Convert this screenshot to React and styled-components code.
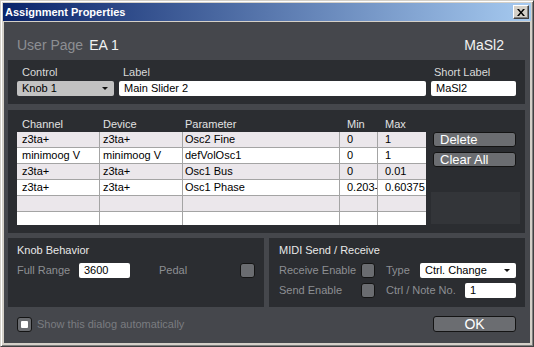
import React from 'react';
import styled, { createGlobalStyle } from 'styled-components';

const Global = createGlobalStyle`
  html, body { margin: 0; padding: 0; background: #d4d0c8; }
  body { font-family: "Liberation Sans", Arial, sans-serif; font-size: 11px; }
  * { box-sizing: border-box; }
`;

const Window = styled.div`
  width: 534px;
  height: 347px;
  background: #d4d0c8;
  border-top: 1px solid #d4d0c8;
  border-left: 1px solid #d4d0c8;
  border-right: 1px solid #404040;
  border-bottom: 1px solid #404040;
  box-shadow: inset 1px 1px #ffffff, inset -1px -1px #808080;
  padding: 2px 2px 2px 2px;
  display: flex;
  flex-direction: column;
`;

const TitleBar = styled.div`
  height: 18px;
  flex: none;
  background: linear-gradient(to right, #0a246a, #a6caf0);
  display: flex;
  align-items: center;
  justify-content: space-between;
  padding: 0 2px 0 2px;
`;

const TitleText = styled.span`
  color: #fff;
  font-weight: bold;
  font-size: 11px;
  line-height: 14px;
`;

const CloseBtn = styled.div`
  width: 16px;
  height: 14px;
  background: #d4d0c8;
  border-top: 1px solid #ffffff;
  border-left: 1px solid #ffffff;
  border-right: 1px solid #404040;
  border-bottom: 1px solid #404040;
  box-shadow: inset -1px -1px #808080;
  display: flex;
  align-items: center;
  justify-content: center;
`;

const Content = styled.div`
  flex: 1;
  margin: 1px 1px 1px 1px;
  background: #45474c;
  display: flex;
  flex-direction: column;
  padding: 0 5px 0 4px;
`;

const Header = styled.div`
  height: 38px;
  flex: none;
  display: flex;
  align-items: flex-start;
  justify-content: space-between;
  padding: 15px 21px 0 9px;
  font-size: 14px;
  line-height: 16px;
`;

const Dim = styled.span`
  color: ${p => p.$c || '#8d8f93'};
`;

const Bright = styled.span`
  color: #f2f2f2;
  margin-left: ${p => p.$ml || 0}px;
`;

const Panel = styled.div`
  background: #2b2d31;
  flex: none;
  height: ${p => p.$h}px;
  padding: ${p => p.$pad};
`;

const FieldRow = styled.div`
  display: flex;
  gap: 5px;
`;

const Field = styled.div`
  width: ${p => p.$w}px;
  display: flex;
  flex-direction: column;
`;

const TopLabel = styled.div`
  color: #dadada;
  font-size: 11px;
  line-height: 13px;
  height: 13px;
  margin-bottom: 2px;
  padding-left: ${p => p.$pl ?? 4}px;
`;

const Input = styled.div`
  width: ${p => (p.$w ? p.$w + 'px' : '100%')};
  height: 15px;
  background: #ffffff;
  border-radius: 2px;
  color: #000;
  font-size: 11px;
  line-height: 15px;
  padding-left: 5px;
  white-space: nowrap;
  overflow: hidden;
`;

const Select = styled.div`
  width: ${p => (p.$w ? p.$w + 'px' : '100%')};
  height: 15px;
  background: ${p => p.$bg || '#c2c2c2'};
  border-radius: 2px;
  color: #000;
  font-size: 11px;
  line-height: 15px;
  padding: 0 5px;
  display: flex;
  align-items: center;
  justify-content: space-between;
  &::after {
    content: '';
    border-left: 3px solid transparent;
    border-right: 3px solid transparent;
    border-top: 3px solid #111;
    margin-right: 1px;
  }
`;

const TableArea = styled.div`
  display: flex;
`;

const TableCol = styled.div`
  width: 409px;
  display: flex;
  flex-direction: column;
`;

const HeadRow = styled.div`
  height: 22px;
  display: grid;
  grid-template-columns: 83px 83px 157px 38px 48px;
  align-items: end;
  padding-bottom: 1px;
  color: #e2e2e2;
  line-height: 13px;
`;

const HeadCell = styled.div`
  padding-left: ${p => p.$pl ?? 5}px;
`;

const Table = styled.div`
  height: 93px;
  overflow: hidden;
`;

const Row = styled.div`
  height: 16px;
  display: grid;
  grid-template-columns: 83px 83px 157px 38px 48px;
  background: ${p => (p.$alt ? '#ebe7eb' : '#ffffff')};
  border-bottom: 1px solid #a4a4a4;
`;

const Cell = styled.div`
  border-right: ${p => (p.$last ? 'none' : '1px solid #a4a4a4')};
  color: #000;
  line-height: 15px;
  padding-left: ${p => p.$pl ?? 5}px;
  white-space: nowrap;
  overflow: hidden;
`;

const SideCol = styled.div`
  width: 89px;
  margin-left: 5px;
  padding-top: 22px;
  display: flex;
  flex-direction: column;
`;

const Button = styled.div`
  width: 83px;
  height: ${p => p.$h || 15}px;
  margin-left: 2px;
  margin-bottom: 5px;
  background: #6b6d71;
  border: 1px solid #141414;
  border-radius: 3px;
  color: #fff;
  font-size: ${p => p.$fs || 13}px;
  line-height: ${p => (p.$h || 15) - 2}px;
  padding-left: ${p => (p.$center ? 0 : 6)}px;
  text-align: ${p => (p.$center ? 'center' : 'left')};
`;

const DarkBox = styled.div`
  margin-top: 20px;
  height: 32px;
  background: #333539;
`;

const BottomRow = styled.div`
  display: flex;
  gap: 5px;
  margin-top: 5px;
`;

const SubPanel = styled.div`
  width: ${p => p.$w}px;
  height: 69px;
  background: #2b2d31;
  padding: ${p => p.$pad};
`;

const SubTitle = styled.div`
  color: #e8e8e8;
  font-size: 11px;
  line-height: 13px;
  margin-bottom: 6px;
`;

const CtlRow = styled.div`
  display: flex;
  align-items: center;
  height: 15px;
`;

const GrayLabel = styled.span`
  color: #8d8f93;
  font-size: 11px;
  line-height: 15px;
  width: ${p => (p.$w ? p.$w + 'px' : 'auto')};
  padding-left: ${p => p.$pl || 0}px;
  white-space: nowrap;
  flex: none;
`;

const Check = styled.div`
  width: ${p => p.$s || 15}px;
  height: 15px;
  flex: none;
  background: #6a6c70;
  border: 1px solid #141414;
  border-radius: 3px;
  display: flex;
  align-items: center;
  justify-content: center;
`;

const CheckMark = styled.div`
  width: 7px;
  height: 7px;
  background: #ffffff;
  border-radius: 1px;
`;

const MidiGrid = styled.div`
  display: grid;
  grid-template-columns: 82px 14px 130px;
  column-gap: 0;
  row-gap: 5px;
`;

const MidiRight = styled.div`
  margin-left: 11px;
  display: flex;
  align-items: center;
  justify-content: space-between;
  width: 130px;
`;

const Footer = styled.div`
  flex: 1;
  display: flex;
  align-items: center;
  justify-content: space-between;
  padding: 0 9px 2px 9px;
`;

const FooterCheck = styled.div`
  display: flex;
  align-items: center;
  gap: 5px;
`;

const rows = [
  ['z3ta+', 'z3ta+', 'Osc2 Fine', '0', '1'],
  ['minimoog V', 'minimoog V', 'defVolOsc1', '0', '1'],
  ['z3ta+', 'z3ta+', 'Osc1 Bus', '0', '0.01'],
  ['z3ta+', 'z3ta+', 'Osc1 Phase', '0.203-', '0.60375'],
  ['', '', '', '', ''],
  ['', '', '', '', ''],
];

const heads = ['Channel', 'Device', 'Parameter', 'Min', 'Max'];
const pads = [5, 3, 2, 7, 7];

export default function App() {
  return (
    <>
      <Global />
      <Window>
        <TitleBar>
          <TitleText>Assignment Properties</TitleText>
          <CloseBtn>
            <svg width="8" height="7" viewBox="0 0 8 7">
              <path d="M0 0h2l2 2.5L6 0h2L5 3.5 8 7H6L4 4.5 2 7H0l3-3.5z" fill="#000" />
            </svg>
          </CloseBtn>
        </TitleBar>
        <Content>
          <Header>
            <span>
              <Dim>User Page</Dim>
              <Bright $ml={6}>EA 1</Bright>
            </span>
            <Bright>MaSl2</Bright>
          </Header>

          <Panel $h={44} $pad="6px 9px 0 9px">
            <FieldRow>
              <Field $w={97}>
                <TopLabel $pl={5}>Control</TopLabel>
                <Select>Knob 1</Select>
              </Field>
              <Field $w={307}>
                <TopLabel>Label</TopLabel>
                <Input>Main Slider 2</Input>
              </Field>
              <Field $w={85}>
                <TopLabel $pl={3}>Short Label</TopLabel>
                <Input>MaSl2</Input>
              </Field>
            </FieldRow>
          </Panel>

          <Panel $h={123} $pad="0 5px 0 9px" style={{ marginTop: 6 }}>
            <TableArea>
              <TableCol>
                <HeadRow>
                  {heads.map((h, i) => (
                    <HeadCell key={h} $pl={pads[i]}>{h}</HeadCell>
                  ))}
                </HeadRow>
                <Table>
                  {rows.map((r, i) => (
                    <Row key={i} $alt={i % 2 === 0}>
                      {r.map((c, j) => (
                        <Cell key={j} $pl={pads[j]} $last={j === 4}>{c}</Cell>
                      ))}
                    </Row>
                  ))}
                </Table>
              </TableCol>
              <SideCol>
                <Button>Delete</Button>
                <Button>Clear All</Button>
                <DarkBox />
              </SideCol>
            </TableArea>
          </Panel>

          <BottomRow>
            <SubPanel $w={256} $pad="6px 9px 0 9px">
              <SubTitle>Knob Behavior</SubTitle>
              <CtlRow>
                <GrayLabel $w={62}>Full Range</GrayLabel>
                <Input $w={51}>3600</Input>
                <GrayLabel $w={110} $pl={29}>Pedal</GrayLabel>
                <Check />
              </CtlRow>
            </SubPanel>
            <SubPanel $w={256} $pad="6px 9px 0 10px">
              <SubTitle>MIDI Send / Receive</SubTitle>
              <MidiGrid>
                <GrayLabel>Receive Enable</GrayLabel>
                <Check $s={14} />
                <MidiRight>
                  <GrayLabel>Type</GrayLabel>
                  <Select $w={96} $bg="#ffffff">Ctrl. Change</Select>
                </MidiRight>
                <GrayLabel>Send Enable</GrayLabel>
                <Check $s={14} />
                <MidiRight>
                  <GrayLabel>Ctrl / Note No.</GrayLabel>
                  <Input $w={51}>1</Input>
                </MidiRight>
              </MidiGrid>
            </SubPanel>
          </BottomRow>

          <Footer>
            <FooterCheck>
              <Check><CheckMark /></Check>
              <Dim $c="#7a7c80">Show this dialog automatically</Dim>
            </FooterCheck>
            <Button $h={16} $fs={14} $center style={{ marginBottom: 0 }}>OK</Button>
          </Footer>
        </Content>
      </Window>
    </>
  );
}
